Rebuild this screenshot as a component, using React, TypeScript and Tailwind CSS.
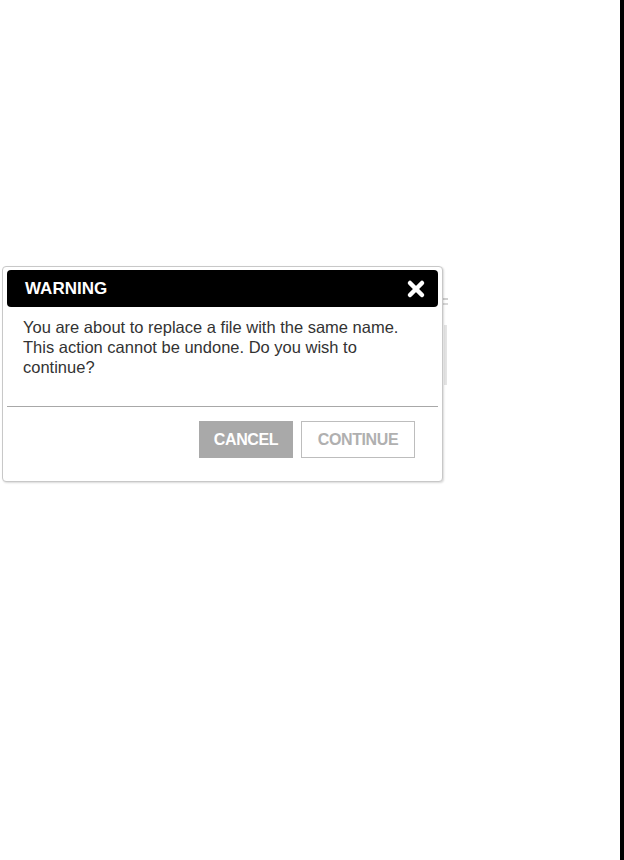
import { X } from 'lucide-react'

export default function App() {
  return (
    <div className="flex h-[860px] w-[624px] bg-white font-['Liberation_Sans',Arial,sans-serif]">
      <div className="relative flex-1">
        {/* page content peeking behind the dialog */}
        <div className="absolute left-[440px] top-[298px] h-[2px] w-[8px] bg-[#d0d0d0]" />
        <div className="absolute left-[440px] top-[303px] h-[2px] w-[8px] bg-[#d8d8d8]" />
        <div className="absolute left-[444px] top-[325px] h-[60px] w-[3px] bg-[#e4e4e4]" />

        <div className="relative ml-[2px] mt-[266px] w-[441px] rounded-[4px] border border-[#c8c8c8] bg-white px-[4px] pb-[23px] pt-[3px] shadow-[1px_1px_2px_rgba(0,0,0,0.15)]">
          <div className="flex h-[37px] items-center justify-between rounded-[4px] bg-black pl-[18px] pr-[10px]">
            <span className="text-[17px] font-bold text-white">WARNING</span>
            <X className="h-[24px] w-[24px] text-white" strokeWidth={4.5} />
          </div>
          <p className="px-[16px] pt-[10px] text-[16.5px] leading-[20px] text-[#333]">
            You are about to replace a file with the same name.
            <br />
            This action cannot be undone. Do you wish to
            <br />
            continue?
          </p>
          <div className="mt-[29px] h-px bg-[#a8a8a8]" />
          <div className="mt-[14px] flex justify-end gap-[8px] pr-[23px]">
            <button className="h-[37px] w-[94px] bg-[#a9a9a9] text-[16px] font-bold tracking-[-0.4px] text-white">
              CANCEL
            </button>
            <button className="h-[37px] w-[114px] border border-[#bdbdbd] bg-white text-[16px] font-bold tracking-[-0.4px] text-[#b0b0b0]">
              CONTINUE
            </button>
          </div>
        </div>
      </div>
      <div className="h-full w-[4px] bg-black" />
    </div>
  )
}
